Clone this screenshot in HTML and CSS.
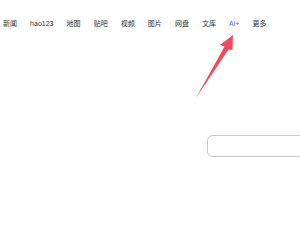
FILE: index.html
```html
<!DOCTYPE html>
<html>
<head>
<meta charset="utf-8">
<link rel="stylesheet" href="styles.css">
</head>
<body>
<div class="page">
  <nav class="nav">
    <span class="item">新闻</span>
    <span class="item">hao123</span>
    <span class="item">地图</span>
    <span class="item">贴吧</span>
    <span class="item">视频</span>
    <span class="item">图片</span>
    <span class="item">网盘</span>
    <span class="item">文库</span>
    <span class="item ai">Ai+</span>
    <span class="item">更多</span>
  </nav>
  <div class="search-row">
    <div class="search-box"></div>
  </div>
  <svg class="arrow" width="300" height="225" viewBox="0 0 300 225">
    <polygon points="233,35 220,45 224.5,46.5 196,98 228.5,49.5 232.5,50" fill="#ef4b5c"/>
  </svg>
</div>
</body>
</html>
```
FILE: styles.css
```css
html, body {
  margin: 0;
  padding: 0;
  background: #ffffff;
  overflow: hidden;
}
.page {
  position: relative;
  width: 300px;
  height: 225px;
  overflow: hidden;
  font-family: "Liberation Sans", "Noto Sans CJK SC", sans-serif;
}
.nav {
  display: flex;
  align-items: center;
  gap: 13.1px;
  padding: 19px 0 0 3px;
  height: 10px;
  font-size: 7px;
  line-height: 10px;
  color: #333333;
  white-space: nowrap;
}
.item.ai {
  color: #4e6ef2;
}
.search-row {
  padding: 106px 0 0 207px;
}
.search-box {
  width: 120px;
  height: 20px;
  border: 1.5px solid #c8cad0;
  border-radius: 6px;
}
.arrow {
  position: absolute;
  left: 0;
  top: 0;
  pointer-events: none;
}
```
